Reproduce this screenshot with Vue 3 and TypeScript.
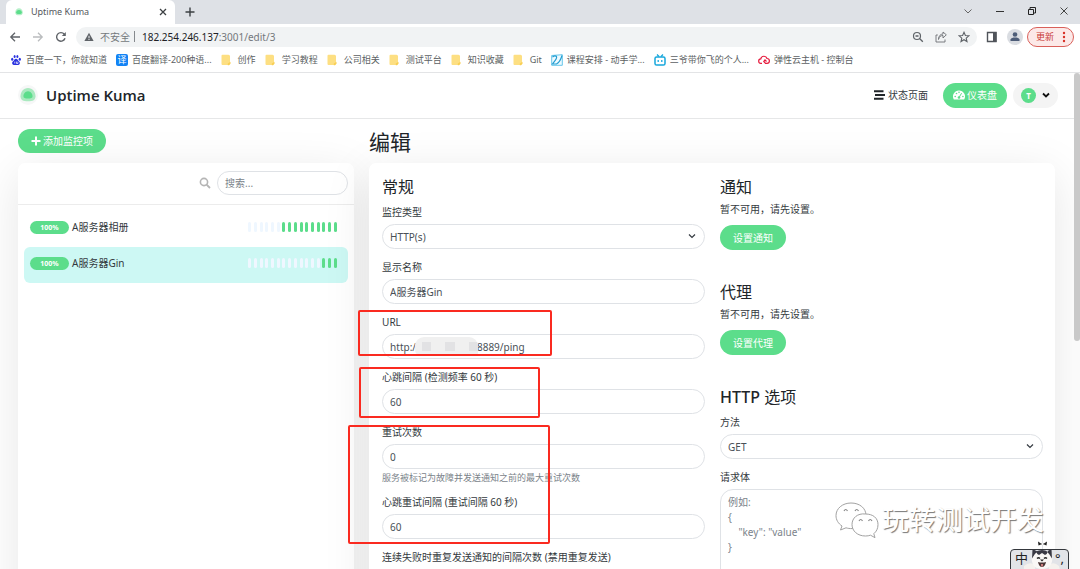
<script setup lang="ts">
import { ref } from 'vue'

interface Bookmark { icon: string; text: string }
interface Monitor { name: string; uptime: string; empty: number; active: boolean }

const bookmarks: Bookmark[] = [
  { icon: 'paw', text: '百度一下，你就知道' },
  { icon: 'translate', text: '百度翻译-200种语...' },
  { icon: 'folder', text: '创作' },
  { icon: 'folder', text: '学习教程' },
  { icon: 'folder', text: '公司相关' },
  { icon: 'folder', text: '测试平台' },
  { icon: 'folder', text: '知识收藏' },
  { icon: 'folder', text: 'Git' },
  { icon: 'course', text: '课程安排 - 动手学...' },
  { icon: 'tv', text: '三爷带你飞的个人...' },
  { icon: 'cloud', text: '弹性云主机 - 控制台' },
]

const monitors: Monitor[] = [
  { name: 'A服务器相册', uptime: '100%', empty: 6, active: false },
  { name: 'A服务器Gin', uptime: '100%', empty: 13, active: true },
]

const search = ref('')
const monitorType = ref('HTTP(s)')
const displayName = ref('A服务器Gin')
const url = ref('http://' + '\u00a0'.repeat(22) + '8889/ping')
const interval = ref('60')
const retries = ref('0')
const retryInterval = ref('60')
const method = ref('GET')
const body = ref('')
const bodyPlaceholder = '例如:\n{\n    "key": "value"\n}'
</script>

<template>
  <div class="window">
    <div class="tabs">
      <div class="tab">
        <svg class="fav" viewBox="0 0 24 24"><path d="M12 3c5 0 9 4 9 10 0 5-3 7-9 7s-9-2-9-7c0-6 4-10 9-10z" fill="#b5efc8" /><path d="M12 7c4 0 7 3 7 7 0 2-3 3-7 3s-7-1-7-3c0-4 3-7 7-7z" fill="#5cdd8b" /></svg>
        <span class="tab-title">Uptime Kuma</span>
        <button class="plain" aria-label="Close tab"><svg width="8" height="8" viewBox="0 0 8 8"><path d="M1 1l6 6M7 1L1 7" stroke="#3c4043" stroke-width="1.3" /></svg></button>
      </div>
      <button class="plain new-tab" aria-label="New tab"><svg width="10" height="10" viewBox="0 0 10 10"><path d="M5 .5v9M.5 5h9" stroke="#3c4043" stroke-width="1.4" /></svg></button>
      <div class="win-controls">
        <button class="plain" aria-label="Tabs"><svg width="10" height="10" viewBox="0 0 10 10"><path d="M1.500 3.500L5 7l3.500-3.500" fill="none" stroke="#666" /></svg></button>
        <button class="plain" aria-label="Minimize"><svg width="10" height="10" viewBox="0 0 10 10"><path d="M1 5.500h8" stroke="#333" /></svg></button>
        <button class="plain" aria-label="Restore"><svg width="10" height="10" viewBox="0 0 10 10"><path d="M1.500 3.500h5v5h-5zM3 3V1.500h5.500V7H7" fill="none" stroke="#222" /></svg></button>
        <button class="plain" aria-label="Close"><svg width="10" height="10" viewBox="0 0 10 10"><path d="M1.500 1.500l7 7M8.500 1.500l-7 7" stroke="#444" /></svg></button>
      </div>
    </div>

    <div class="toolbar">
      <div class="nav">
        <button class="plain" aria-label="Back"><svg width="12" height="12" viewBox="0 0 12 12"><path d="M11 6H2M6 1.800L1.800 6 6 10.200" fill="none" stroke="#5f6368" stroke-width="1.300" /></svg></button>
        <button class="plain" aria-label="Forward"><svg width="12" height="12" viewBox="0 0 12 12"><path d="M1 6h9M6 1.800L10.200 6 6 10.200" fill="none" stroke="#babcbe" stroke-width="1.300" /></svg></button>
        <button class="plain" aria-label="Reload"><svg width="12" height="12" viewBox="0 0 12 12"><path d="M10 7.300A4.300 4.300 0 1 1 9.300 3.300" fill="none" stroke="#5f6368" stroke-width="1.400" /><path d="M10.800 1v4H6.800z" fill="#5f6368" /></svg></button>
      </div>
      <div class="omnibox">
        <svg width="10" height="10" viewBox="0 0 10 10"><path d="M5 .8L9.600 9H.4z" fill="#5f6368" /><path d="M5 3.800v2.500M5 7v1" stroke="#f1f3f4" /></svg>
        <span class="insecure">不安全</span><span class="bar"></span>
        <span class="address"><b>182.254.246.137</b>:3001/edit/3</span>
        <div class="omni-icons">
          <svg width="12" height="12" viewBox="0 0 12 12"><circle cx="5" cy="5" r="3.500" fill="none" stroke="#5f6368" stroke-width="1.200" /><path d="M7.800 7.800l3 3M3.500 5h3" stroke="#5f6368" stroke-width="1.300" /></svg>
          <svg width="12" height="12" viewBox="0 0 12 12"><path d="M2.800 4H1v7h9V8.500M3.500 8.500C4 5.500 6 4.500 8 4.500V7l3.300-3.200L8 1v2C5.500 3 3.500 5 3.500 8.500z" fill="none" stroke="#6d7175" stroke-width=".9" /></svg>
          <svg width="12" height="12" viewBox="0 0 12 12"><path d="M6 1.300l1.400 3.200 3.400.3-2.600 2.300.8 3.400L6 8.700l-3 1.800.8-3.400L1.200 4.800l3.400-.3z" fill="none" stroke="#5f6368" stroke-width="1.100" /></svg>
        </div>
      </div>
      <svg class="panel-icon" width="12" height="12" viewBox="0 0 12 12"><path d="M1.500 1.500h8.500v9H1.500z" fill="none" stroke="#50545a" stroke-width="1.400" /><path d="M7 1h3.500v10H7z" fill="#50545a" /></svg>
      <svg class="profile" width="16" height="16" viewBox="0 0 16 16"><circle cx="8" cy="8" r="8" fill="#dadde2" /><circle cx="8" cy="5.500" r="2.300" fill="#4d5d78" /><path d="M3.500 12V10.500C4 9 6 8.500 8 8.500s4 .5 4.500 2V12z" fill="#4d5d78" /></svg>
      <button class="update">更新<svg width="4" height="12" viewBox="0 0 4 12"><g fill="#d93025"><circle cx="2" cy="2" r="1.200" /><circle cx="2" cy="6" r="1.200" /><circle cx="2" cy="10" r="1.200" /></g></svg></button>
    </div>

    <nav class="bookmarks">
      <a v-for="b in bookmarks" :key="b.text" href="#" :class="{ narrow: b.icon === 'folder' }">
        <svg v-if="b.icon === 'paw'" viewBox="0 0 12 12"><g fill="#2a32df"><ellipse cx="2.200" cy="5.300" rx="1.100" ry="1.500" /><ellipse cx="4.600" cy="2.400" rx="1" ry="1.500" /><ellipse cx="7.400" cy="2.400" rx="1" ry="1.500" /><ellipse cx="9.800" cy="5.300" rx="1.100" ry="1.500" /><path d="M6 4.800c1.600 0 1.800 1.700 3.200 2.800 1.300 1.300.6 3.400-.9 3.400H3.700c-1.500 0-2.200-2.100-.9-3.400C4.200 6.500 4.400 4.800 6 4.800z" /></g><path d="M4.800 7.600v1.900M6.500 7.600v1.900h1.400V7.600" fill="none" stroke="#fff" stroke-width=".7" /></svg>
        <span v-else-if="b.icon === 'translate'" class="translate">译</span>
        <svg v-else-if="b.icon === 'folder'" viewBox="0 0 10 12"><path d="M1.500.8h6A1.500 1.500 0 0 1 9 2.300v8H8.500L7.800 11H1.500A1 1 0 0 1 .5 10V1.800a1 1 0 0 1 1-1z" fill="#fddf82" /><path d="M9.500 7.800v1.900L8 11.200H6.800V9.500z" fill="#f9cf54" /></svg>
        <svg v-else-if="b.icon === 'course'" viewBox="0 0 12 12"><path d="M.7 1.500L11.300.7v10.600H.7z" fill="#eefaff" stroke="#56bfe8" stroke-width=".9" /><path d="M1.500 3Q4 1 5.500 2.500C6.500 4.500 3 8 1.500 10h4C7.500 9 10 5 11 1.500" fill="none" stroke="#249ed2" stroke-width="1.200" /></svg>
        <svg v-else-if="b.icon === 'tv'" viewBox="0 0 12 12"><rect x="1" y="3" width="10" height="8" rx="1.600" fill="none" stroke="#16a7dc" stroke-width="1.500" /><path d="M3 .5l2 2M9 .5l-2 2M4.200 6v2M7.800 6v2" stroke="#16a7dc" stroke-width="1.300" /></svg>
        <svg v-else viewBox="0 0 12 12"><path d="M4 9.300H3a2.200 2.200 0 0 1-.2-4.400A3.200 3.200 0 0 1 9 4.500a2.400 2.400 0 0 1 0 4.800H7.500L5.800 7.500 7 6l1.500 1.500" fill="none" stroke="#e6193c" stroke-width="1.200" /></svg>
        <span>{{ b.text }}</span>
      </a>
    </nav>

    <div class="viewport">
      <div class="page">
        <header>
          <svg class="logo" viewBox="0 0 24 24"><circle cx="12" cy="12" r="12" fill="#f6f7f7" /><path d="M12 3.500c5.500 0 9 5 9 10 0 4.500-3 6-9 6s-9-1.500-9-6c0-5 3.500-10 9-10z" fill="#a9e9bf" /><path d="M12 7.500c3.500 0 5.500 3.500 5.500 6 0 2.200-2 2.800-5.500 2.800s-5.500-.6-5.500-2.800c0-2.500 2-6 5.500-6z" fill="#5cdd8b" /></svg>
          <span class="brand">Uptime Kuma</span>
          <a href="#" class="status"><svg width="11" height="10" viewBox="0 0 11 10"><path d="M0 1.200h9.500M1 5h10M0 8.800h9.500" stroke="#212529" stroke-width="2" /></svg>状态页面</a>
          <a href="#" class="btn dash"><svg width="12" height="10" viewBox="0 0 12 10"><path d="M6 .5A6 6 0 0 0 .8 9.500h10.400A6 6 0 0 0 6 .5z" fill="#fff" /><g fill="#5cdd8b"><circle cx="2.200" cy="6.500" r=".8" /><circle cx="3.500" cy="3.500" r=".8" /><circle cx="6" cy="2.300" r=".8" /><circle cx="9.900" cy="6.500" r=".8" /><circle cx="6" cy="7.500" r="1.300" /></g><path d="M6 7.500l2.600-4.300" stroke="#5cdd8b" /></svg>仪表盘</a>
          <button class="user" aria-label="T"><span class="avatar">T</span><svg width="8" height="8" viewBox="0 0 8 8"><path d="M1 2.500l3 3 3-3" fill="none" stroke="#111" stroke-width="1.800" /></svg></button>
        </header>

        <main>
          <aside>
            <button class="btn add"><svg width="10" height="10" viewBox="0 0 10 10"><path d="M5 .5v9M.5 5h9" stroke="#fff" stroke-width="2" /></svg>添加监控项</button>
            <section class="card list">
              <div class="list-head">
                <svg width="12" height="12" viewBox="0 0 12 12"><circle cx="5" cy="5" r="3.600" fill="none" stroke="#b5b5b5" stroke-width="1.600" /><path d="M7.600 7.600l3.400 3.400" stroke="#b5b5b5" stroke-width="1.800" /></svg>
                <input v-model="search" class="control search" placeholder="搜索..." aria-label="搜索">
              </div>
              <div class="items">
                <a v-for="m in monitors" :key="m.name" href="#" class="item" :class="{ active: m.active }">
                  <span class="badge">{{ m.uptime }}</span>
                  <span class="name">{{ m.name }}</span>
                  <span class="beats"><i v-for="n in 16" :key="n" :class="{ up: n > m.empty }"></i></span>
                </a>
              </div>
            </section>
          </aside>

          <form @submit.prevent>
            <h1>编辑</h1>
            <div class="card editor">
              <div class="column">
                <h2>常规</h2>
                <div class="field">
                  <label for="type">监控类型</label>
                  <div class="select"><select id="type" v-model="monitorType" class="control"><option>HTTP(s)</option></select><svg viewBox="0 0 8 8"><path d="M1 2.500l3 3 3-3" fill="none" stroke="#343a40" stroke-width="1.200" /></svg></div>
                </div>
                <div class="field"><label for="name">显示名称</label><input id="name" v-model="displayName" class="control"></div>
                <div class="field">
                  <label for="url">URL</label>
                  <div class="select"><input id="url" v-model="url" class="control"><span class="mosaic"><i></i><i></i><i></i></span></div>
                </div>
                <div class="field"><label for="interval">心跳间隔 (检测频率 60 秒)</label><input id="interval" v-model="interval" class="control"></div>
                <div class="field"><label for="retries">重试次数</label><input id="retries" v-model="retries" class="control"><p class="help">服务被标记为故障并发送通知之前的最大重试次数</p></div>
                <div class="field"><label for="retry-interval">心跳重试间隔 (重试间隔 60 秒)</label><input id="retry-interval" v-model="retryInterval" class="control"></div>
                <div class="field"><label for="resend">连续失败时重复发送通知的间隔次数 (禁用重复发送)</label><input id="resend" class="control"></div>
              </div>
              <div class="column">
                <section class="setup"><h2>通知</h2><p>暂不可用，请先设置。</p><button class="btn">设置通知</button></section>
                <section class="setup"><h2>代理</h2><p>暂不可用，请先设置。</p><button class="btn">设置代理</button></section>
                <h2><b>HTTP</b> 选项</h2>
                <div class="field">
                  <label for="method">方法</label>
                  <div class="select"><select id="method" v-model="method" class="control"><option>GET</option></select><svg viewBox="0 0 8 8"><path d="M1 2.500l3 3 3-3" fill="none" stroke="#343a40" stroke-width="1.200" /></svg></div>
                </div>
                <div class="field"><label for="body">请求体</label><textarea id="body" v-model="body" class="control" :placeholder="bodyPlaceholder"></textarea></div>
              </div>
            </div>
          </form>
        </main>
      </div>
      <div class="scrollbar"><div class="thumb"></div></div>
    </div>

    <div class="mark mark-url"></div>
    <div class="mark mark-interval"></div>
    <div class="mark mark-retry"></div>

    <div class="watermark">
      <svg width="44" height="38" viewBox="0 0 44 38">
        <g fill="#fff" stroke="#a2a2a2" stroke-width="1">
          <path d="M16 2C7.500 2 1 7.500 1 14.500c0 4.500 2.300 8 6 10.500L5.500 29l5.500-2.200c7 2.200 20 .2 20-12.300C31 7 24.500 2 16 2z" />
          <path d="M30.500 13C22.500 12 17 17 17 23.500S22.500 35 30.500 35c2 0 3.500-.3 5-.8l4.500 2.500-1.200-4c2.700-2.200 4.200-5.200 4.200-9.200C43 17 38 13 30.500 13z" />
        </g>
        <path d="M9 10q1.700-3 3.500 0M20 10q1.700-3 3.500 0M24 20q1.700-3 3.500 0M33.500 20q1.700-3 3.500 0" fill="none" stroke="#888" stroke-width="1.200" />
      </svg>
      <span>玩转测试开发</span>
    </div>

    <div class="ime">
      <span class="ime-mode">中</span><span class="ime-punct">°,</span>
      <svg class="dog" width="38" height="30" viewBox="0 0 38 30">
        <path d="M1 26q6-5 11-1v5H1zM36 26q-5-5-10-1v5h11z" fill="#f5f2ee" />
        <path d="M9 14q2-3 5-2 5-2 10 0 3-1 5 2 2 15-10 15T9 14z" fill="#faf8f6" />
        <path d="M9.500 9l5 2.500q-3 2-5.500 7zM28.500 9l-5 2.500q3 2 5.500 7zM13 11.500q6-3 12 0-1 3-3 3.500l-3-2-3 2q-2-.5-3-3.500z" fill="#3a3a44" />
        <path d="M14 18.500q1.500-1.500 3 0M21 18.500q1.500-1.500 3 0" fill="none" stroke="#222" stroke-width="1.300" />
        <path d="M17 19.500h4l-2 2z" fill="#222" /><path d="M15 22q4 1 8 0-1 5-4 5t-4-5z" fill="#4b3636" /><path d="M18 24h2v2.500h-2z" fill="#c97c7c" />
        <path d="M15 1.500l3 2h3l3-2-.5 4-2.500-1h-3l-2.500 1z" fill="#222" /><circle cx="19.500" cy="4" r="1" fill="#fff" />
      </svg>
    </div>
  </div>
</template>

<style>
html, body { margin: 0; overflow: hidden; background: #fff; }
</style>

<style scoped>
* { box-sizing: border-box; }
.window { position: relative; display: flex; flex-direction: column; height: 100vh; overflow: hidden; font-family: "Noto Sans", "Noto Sans CJK SC", sans-serif; font-size: 10px; line-height: 16px; color: #343a40; }
a { color: inherit; text-decoration: none; }
button, input, select, textarea { font: inherit; }
svg { display: block; flex: none; }
h1, h2, p { margin: 0; font-weight: 400; }
.plain { display: flex; padding: 0; border: 0; background: none; }

.tabs { display: flex; align-items: center; flex: none; height: 24px; padding: 0 11px 0 6px; background: #dee1e6; }
.tab { display: flex; align-items: center; width: 169px; height: 24px; padding: 0 8px; background: #fff; border-radius: 6px 6px 0 0; }
.fav { width: 10px; height: 10px; }
.tab-title { flex: 1; margin-left: 7px; font-size: 9px; color: #55595d; }
.new-tab { margin-left: 10px; }
.win-controls { display: flex; gap: 22px; margin-left: auto; padding-bottom: 3px; }

.toolbar { display: flex; align-items: center; flex: none; height: 25px; padding: 0 6px 0 9px; }
.nav { display: flex; gap: 11px; }
.omnibox { display: flex; flex: 1; align-items: center; height: 20px; margin-left: 9px; padding: 0 7px 0 8px; border-radius: 10px; background: #f1f3f4; color: #74787c; }
.insecure { margin-left: 6px; }
.bar { width: 1px; height: 11px; margin: 0 7px 0 4px; background: #85898d; }
.address b { font-weight: 400; color: #202124; }
.omni-icons { display: flex; gap: 11px; margin-left: auto; }
.panel-icon { margin-left: 9px; }
.profile { margin-left: 9px; }
.update { display: flex; align-items: center; gap: 8px; height: 20px; margin-left: 4px; padding: 0 7px 0 8px; border: 1px solid #d9605a; border-radius: 10px; background: #fce9e8; color: #c93a37; font-size: 9px; line-height: 12px; }

.bookmarks { display: flex; align-items: center; flex: none; gap: 9px; height: 24px; padding: 0 10px 2px; border-bottom: 1px solid #e3e4e6; font-size: 9px; color: #5c5f63; white-space: nowrap; }
.bookmarks a { display: flex; align-items: center; gap: 4px; }
.bookmarks svg, .translate { width: 12px; height: 12px; }
.bookmarks .narrow { gap: 7px; }
.bookmarks .narrow svg { width: 10px; }
.translate { border-radius: 2px; background: #1283f5; color: #fff; text-align: center; line-height: 12px; }

.viewport { display: flex; flex: 1; min-height: 0; }
.page { flex: 1; min-width: 0; overflow: hidden; }
.scrollbar { width: 6px; background: #fafafa; }
.thumb { height: 54%; border-radius: 3px; background: #c9c9c9; }

header { display: flex; align-items: center; height: 46px; padding: 0 16px 1px 18px; border-bottom: 1px solid #e6e7e8; }
.logo { width: 20px; height: 20px; }
.brand { margin-left: 8px; font-family: "Open Sans", "Noto Sans", sans-serif; font-size: 15px; font-weight: 600; color: #212529; }
.status { display: flex; align-items: center; gap: 3px; margin-left: auto; }
.btn { display: inline-flex; align-items: center; gap: 2px; height: 24px; padding: 0 13px; border: 0; border-radius: 13px; background: #5cdd8b; color: #fff; }
.dash { height: 25px; margin-left: 15px; padding: 0 10px; }
.user { display: flex; align-items: center; gap: 6px; height: 25px; margin-left: 6px; padding: 0 8px; border: 0; border-radius: 13px; background: #f4f4f4; }
.avatar { width: 15px; height: 15px; border-radius: 50%; background: #5cdd8b; color: #fff; font-size: 8px; font-weight: 700; line-height: 15px; text-align: center; }

main { display: grid; grid-template-columns: minmax(0, 49fr) minmax(0, 100fr); gap: 15px; padding: 10px 19px 0 18px; }
.card { border-radius: 7px; background: #fff; box-shadow: 0 10px 47px rgba(0, 0, 0, 0.1); }
aside, form { display: flex; flex-direction: column; align-items: flex-start; gap: 10px; }
.list { width: 100%; height: 560px; }
.list-head { display: flex; align-items: center; justify-content: flex-end; gap: 6px; height: 42px; padding: 0 6px 1px; border-bottom: 1px solid #ececec; }
.control { display: block; width: 100%; height: 25px; padding: 0 7px; border: 1px solid #dfe2e6; border-radius: 13px; outline: 0; background: #fff; color: #495057; appearance: none; }
.control::placeholder { color: #7b838a; opacity: 1; }
.search { width: 131px; height: 24px; }
.items { padding: 6px; }
.item { display: flex; align-items: center; height: 36px; padding: 0 11px 4px 6px; border-radius: 6px; }
.active { background: #cdf8f4; }
.badge { width: 39px; height: 13px; border-radius: 7px; background: #5cdd8b; color: #fff; font-size: 7px; font-weight: 700; line-height: 13px; text-align: center; }
.name { margin-left: 3px; }
.beats { display: flex; justify-content: space-between; width: 89px; margin-left: auto; }
.beats i { width: 3px; height: 10px; border-radius: 2px; background: #eff7ff; }
.beats .up { background: #5cdd8b; }

h1 { padding-top: 2px; font-size: 21px; line-height: 22px; color: #212529; }
h2 { margin-bottom: 7px; font-size: 16px; line-height: 20px; color: #212529; }
h2 b { font-weight: 500; }
.editor { display: grid; grid-template-columns: repeat(2, minmax(0, 1fr)); gap: 15px; width: 100%; padding: 14px 12px 60px 13px; }
.field { margin-bottom: 10px; }
label { display: block; margin-bottom: 4px; }
.help { margin-top: 3px; font-size: 9px; line-height: 12px; color: #7b838a; }
.select { position: relative; }
.select svg { position: absolute; top: 8px; right: 9px; width: 8px; height: 8px; }
textarea.control { height: 140px; padding: 5px 7px; line-height: 15px; resize: none; }
.setup { margin-bottom: 32px; }
.setup h2 { margin-bottom: 4px; }
.setup p { margin-bottom: 8px; }
.setup .btn { display: flex; height: 25px; }

.mosaic { position: absolute; top: 3px; left: 33px; display: flex; align-items: center; gap: 14px; width: 63px; height: 19px; padding-left: 7px; overflow: hidden; border-radius: 9px 9px 3px 6px; background: #f0f0f0; }
.mosaic i { width: 17px; height: 9px; background: #e2e2e4; }
.mark { position: absolute; border: 2px solid #fa2a20; border-radius: 2px; }
.mark-url { left: 358px; top: 310px; width: 194px; height: 46px; }
.mark-interval { left: 359px; top: 367px; width: 181px; height: 51px; }
.mark-retry { left: 348px; top: 425px; width: 202px; height: 119px; }
.watermark { position: absolute; right: 36px; bottom: 30px; display: flex; align-items: center; gap: 3px; color: #fff; font-size: 27px; line-height: 38px; text-shadow: 1px 1px 1px #777; }
.ime { position: absolute; right: 11px; bottom: -4px; display: flex; justify-content: space-between; width: 59px; height: 24px; padding: 0 4px; border: 1px solid #34373c; border-radius: 4px; background: #e2e4e8; color: #222; font-size: 13px; line-height: 17px; }
.dog { position: absolute; left: 12px; bottom: 2px; }
</style>
